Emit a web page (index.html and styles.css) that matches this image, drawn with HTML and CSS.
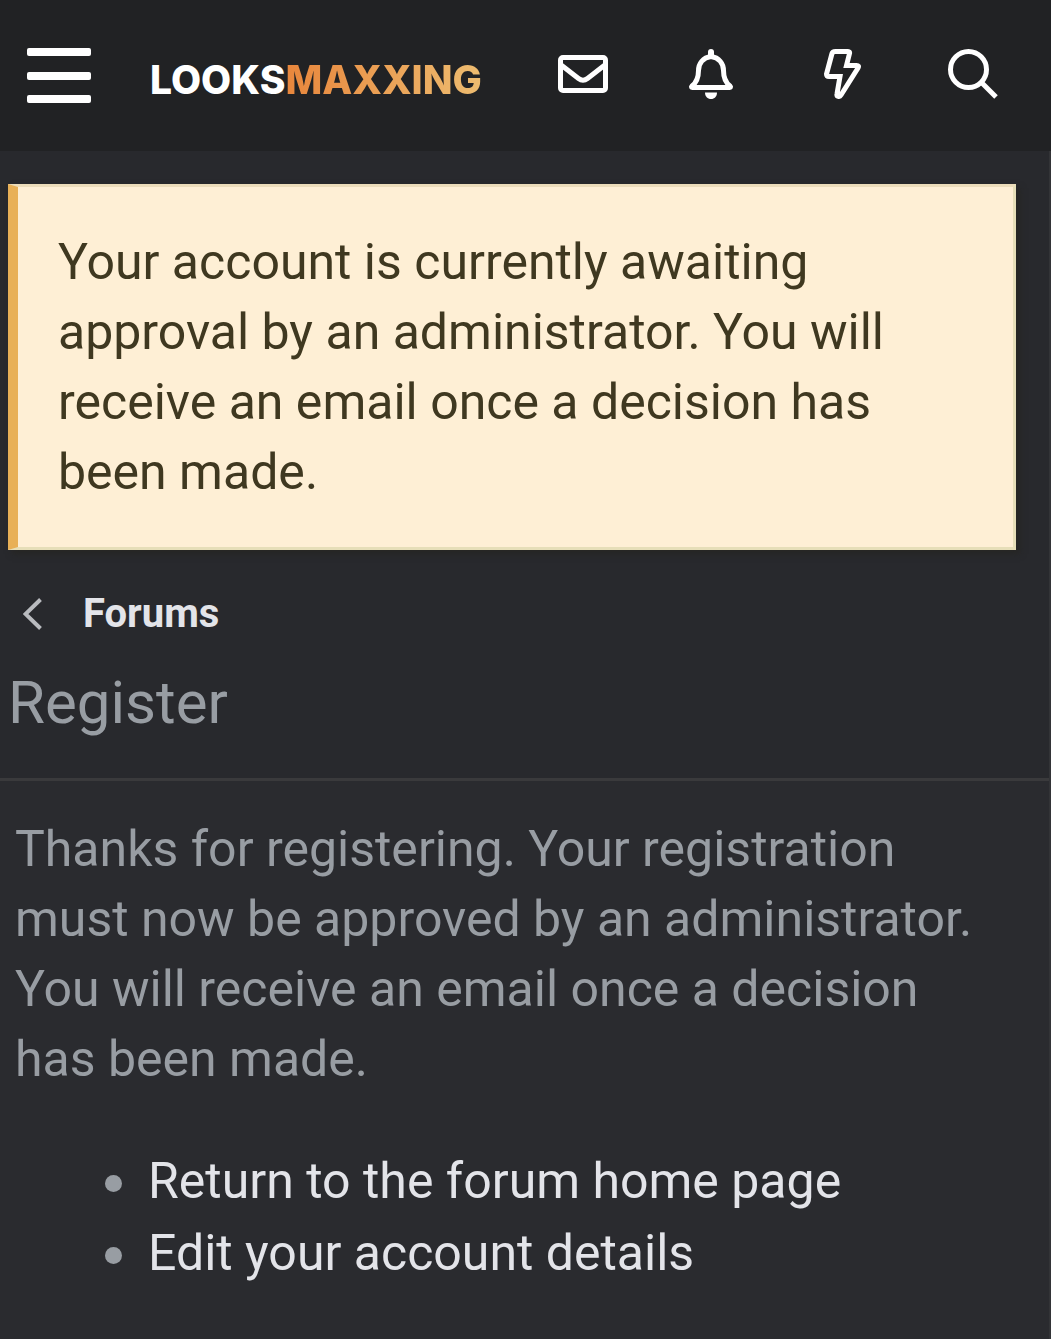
FILE: index.html
```html
<!DOCTYPE html>
<html lang="en">
<head>
    <meta charset="UTF-8">
    <meta name="viewport" content="width=device-width, initial-scale=1.0">
    <title>Register | Looksmaxxing</title>
    <link rel="stylesheet" href="styles.css">
</head>
<body>
    <header class="header">
        <button class="menu" type="button" aria-label="Menu">
            <span class="menu-bar"></span>
            <span class="menu-bar"></span>
            <span class="menu-bar"></span>
        </button>
        <a class="logo" href="#">LOOKS<span class="logo-accent">MAXXING</span></a>
        <nav class="tools">
            <a class="tool" href="#" aria-label="Inbox">
                <svg viewBox="0 0 50 50">
                    <rect x="2.5" y="8.5" width="45" height="33" rx="2.5"/>
                    <path d="M2.5 15.5L20.5 29.5Q25 33 29.5 29.5L47.5 15.5"/>
                </svg>
            </a>
            <a class="tool" href="#" aria-label="Alerts">
                <svg viewBox="0 0 50 50">
                    <path d="M23 7.5C15 8.5 10.5 14.5 10.5 21.5C10.5 29.5 8.5 33.5 4 37C3 38 3.5 38.5 4.5 38.5H41.5C42.5 38.5 43 38 42 37C37.5 33.5 35.5 29.5 35.5 21.5C35.5 14.5 31 8.5 23 7.5Z"/>
                    <path d="M23 3V7" stroke-width="6" stroke-linecap="round"/>
                    <path class="solid" d="M17 43.5H29C29 47.5 26.5 50 23 50S17 47.5 17 43.5Z"/>
                </svg>
            </a>
            <a class="tool" href="#" aria-label="What's new">
                <svg viewBox="0 0 50 50">
                    <path d="M11.500 2.500H24Q26 2.500 25.500 4.500L22.500 16.500H32.500Q35.500 16.500 34 19L17 46C15.500 48.500 12.500 47.500 13 45L16 27.500H5Q2.500 27.500 2.500 25L8 4.500Q8.500 2.500 11.500 2.500Z" transform="translate(6 0)"/>
                </svg>
            </a>
            <a class="tool" href="#" aria-label="Search">
                <svg viewBox="0 0 50 50">
                    <circle cx="20.5" cy="20.5" r="18"/>
                    <path d="M34 34L48 48"/>
                </svg>
            </a>
        </nav>
    </header>

    <div class="page">
        <div class="notice">Your account is currently awaiting approval by an administrator. You will receive an email once a decision has been made.</div>

        <nav class="breadcrumb">
            <a class="breadcrumb-link" href="#">
                <svg class="chevron" viewBox="0 0 19 32"><path d="M17.5 1.5L2.5 16L17.5 30.5"/></svg>
                Forums
            </a>
        </nav>
        <h1 class="title">Register</h1>

        <main class="content">
            <p class="message">Thanks for registering. Your registration must now be approved by an administrator. You will receive an email once a decision has been made.</p>
            <ul class="links">
                <li><a href="#">Return to the forum home page</a></li>
                <li><a href="#">Edit your account details</a></li>
            </ul>
        </main>
    </div>
</body>
</html>
```

FILE: styles.css
```css
* {
    box-sizing: border-box;
}
body {
    margin: 0;
    min-height: 100vh;
    display: flex;
    flex-direction: column;
    background-color: #28292d;
    color: #989da3;
    font-family: Roboto, sans-serif;
    font-size: 50px;
    line-height: 70px;
}
a {
    color: #e3e4e9;
    text-decoration: none;
}

/* header */
.header {
    display: flex;
    align-items: center;
    padding: 48px 53px 48px 27px;
    background-color: #212224;
}
.menu {
    display: flex;
    flex-direction: column;
    justify-content: space-between;
    width: 64px;
    height: 55px;
    padding: 0;
    border: 0;
    background: none;
    cursor: pointer;
}
.menu-bar {
    height: 8px;
    border-radius: 2px;
    background-color: #fff;
}
.logo {
    margin-left: 59px;
    padding-top: 8px;
    color: #fff;
    font-family: Inter, sans-serif;
    font-size: 39px;
    font-weight: 800;
    line-height: 46px;
}
.logo-accent {
    background: linear-gradient(to right, #e8863c, #edbc70);
    -webkit-background-clip: text;
    background-clip: text;
    color: transparent;
}
.tools {
    display: flex;
    gap: 80px;
    margin-left: auto;
}
.tool {
    width: 50px;
    height: 53px;
}
.tool svg {
    display: block;
    width: 50px;
    height: 50px;
    fill: none;
    stroke: #fff;
    stroke-width: 5;
}
.tool .solid {
    fill: #fff;
    stroke: none;
}

/* page */
.page {
    flex: 1;
    display: flex;
    flex-direction: column;
    border-right: 2px solid #333437;
}
.notice {
    margin: 33px 33px 0 8px;
    padding: 40px;
    border: 3px solid #e6deb8;
    border-top-color: #ecdcba;
    border-left: 10px solid #e8b057;
    background-color: #feefd5;
    box-shadow: 4px 4px 6px #262624;
    color: #3f3820;
}
.breadcrumb {
    margin: 36px 23px 0;
    font-size: 40px;
    font-weight: 700;
    line-height: 56px;
}
.breadcrumb-link {
    display: flex;
    align-items: center;
    gap: 41px;
    width: fit-content;
}
.chevron {
    width: 19px;
    height: 32px;
    fill: none;
    stroke: #b9bbbf;
    stroke-width: 4;
}
.title {
    margin: 25px 8px 39px;
    font-size: 60px;
    font-weight: 400;
    line-height: 72px;
}
.content {
    flex: 1;
    padding: 33px 48px 33px 15px;
    border-top: 3px solid #3a3a3c;
    background-color: #2a2b2f;
}
.message {
    margin: 0 0 51px;
}
.links {
    margin: 0;
    padding-left: 90px;
    line-height: 72px;
    list-style: none;
}
.links li {
    display: flex;
    align-items: center;
    gap: 26px;
}
.links li::before {
    content: "";
    width: 17px;
    height: 17px;
    margin-top: 4px;
    border-radius: 50%;
    background-color: #989da3;
}
```
